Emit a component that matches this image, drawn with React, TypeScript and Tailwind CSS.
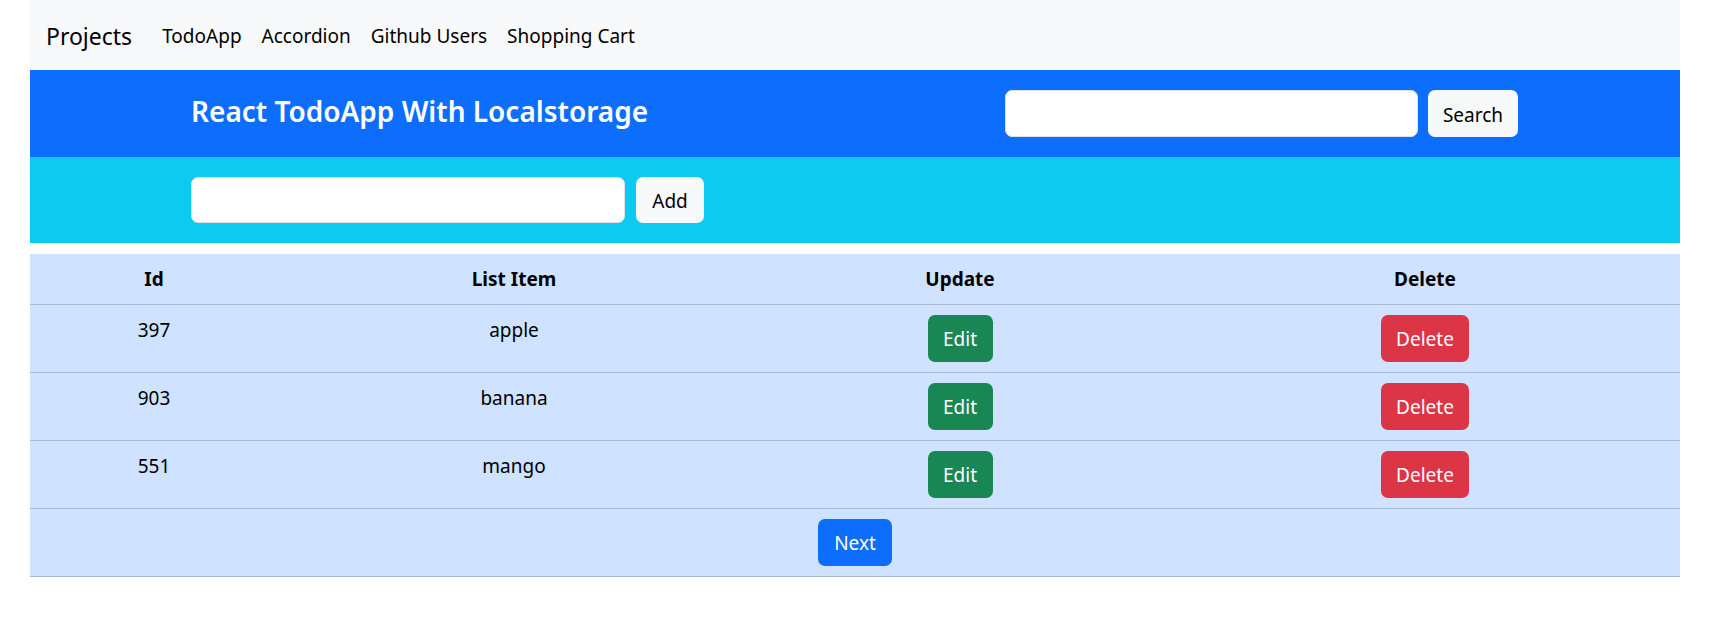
const items = [
  { id: 397, name: 'apple' },
  { id: 903, name: 'banana' },
  { id: 551, name: 'mango' },
];

const links = ['TodoApp', 'Accordion', 'Github Users', 'Shopping Cart'];

export default function App() {
  return (
    <div className="min-h-[641px] bg-white px-[30px] font-['Noto_Sans',sans-serif] text-[#212529]">
      <nav className="flex h-[70px] items-center bg-[#f8f9fa] px-[16px] pt-[2px]">
        <span className="mr-[30px] text-[23px] text-black">Projects</span>
        <div className="flex gap-[20px] text-[19px] text-black">
          {links.map((l) => (
            <span key={l}>{l}</span>
          ))}
        </div>
      </nav>

      <div className="flex h-[87px] items-center bg-[#0d6efd] pl-[161px]">
        <h3 className="mb-[6px] w-[814px] text-[28px] font-semibold text-white">React TodoApp With Localstorage</h3>
        <div className="flex gap-[10px]">
          <input className="h-[47px] w-[413px] rounded-[7px] border border-[#dee2e6] bg-white" />
          <button className="h-[47px] w-[90px] rounded-[7px] bg-[#f8f9fa] pt-[3px] text-[19px] text-black">Search</button>
        </div>
      </div>

      <div className="flex h-[86px] items-center gap-[11px] bg-[#0dcaf0] pl-[161px]">
        <input className="h-[46px] w-[434px] rounded-[7px] border border-[#dee2e6] bg-white" />
        <button className="h-[46px] w-[68px] rounded-[7px] bg-[#f8f9fa] pt-[3px] text-[19px] text-black">Add</button>
      </div>

      <table className="mt-[11px] w-full table-fixed border-collapse bg-[#cfe2ff] text-center text-[19px] text-black">
        <colgroup>
          <col className="w-[248px]" />
          <col className="w-[472px]" />
          <col className="w-[420px]" />
          <col />
        </colgroup>
        <thead>
          <tr className="border-b border-[#a9b7cf]">
            <th className="px-[10px] py-[10px] font-bold leading-[30px]">Id</th>
            <th className="px-[10px] py-[10px] font-bold leading-[30px]">List Item</th>
            <th className="px-[10px] py-[10px] font-bold leading-[30px]">Update</th>
            <th className="px-[10px] py-[10px] font-bold leading-[30px]">Delete</th>
          </tr>
        </thead>
        <tbody>
          {items.map((it) => (
            <tr key={it.id} className="border-b border-[#a9b7cf]">
              <td className="px-[10px] py-[10px] align-top leading-[30px]">{it.id}</td>
              <td className="px-[10px] py-[10px] align-top leading-[30px]">{it.name}</td>
              <td className="px-[10px] py-[10px] align-top">
                <button className="h-[47px] w-[65px] rounded-[7px] bg-[#198754] pt-[2px] text-[19px] text-white">Edit</button>
              </td>
              <td className="px-[10px] py-[10px] align-top">
                <button className="h-[47px] w-[88px] rounded-[7px] bg-[#dc3545] pt-[2px] text-[19px] text-white">Delete</button>
              </td>
            </tr>
          ))}
          <tr className="border-b border-[#a9b7cf]">
            <td colSpan={4} className="px-[10px] py-[10px]">
              <button className="h-[47px] w-[74px] rounded-[7px] bg-[#0d6efd] pt-[2px] text-[19px] text-white">Next</button>
            </td>
          </tr>
        </tbody>
      </table>
    </div>
  );
}
